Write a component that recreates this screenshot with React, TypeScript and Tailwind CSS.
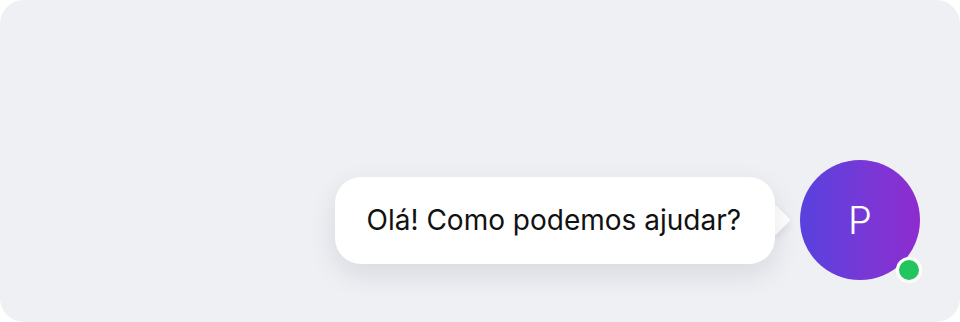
import React from 'react';

export default function App() {
  return (
    <div className="w-[960px] h-[322px] bg-white" style={{ fontFamily: 'Inter, "Noto Sans", sans-serif' }}>
      <div className="w-full h-full rounded-[24px] bg-[#eff0f4] flex items-end justify-end pr-10 pb-[42px]">
        <div className="flex items-center gap-[25px]">
          {/* Greeting bubble */}
          <div className="relative">
            <div className="absolute right-[-11px] top-1/2 -translate-y-1/2 w-[22px] h-[22px] rotate-45 bg-white rounded-[2px] shadow-[3px_3px_8px_rgba(15,23,42,0.08)]"></div>
            <div className="relative bg-white rounded-[26px] h-[87px] pl-8 pr-[34px] flex items-center shadow-[0_10px_28px_rgba(15,23,42,0.10)]">
              <span className="text-[28px] text-[#111]">Olá! Como podemos ajudar?</span>
            </div>
          </div>
          {/* Avatar */}
          <div className="relative w-[120px] h-[120px] rounded-full bg-gradient-to-r from-[#5741de] to-[#8e2bcf] flex items-center justify-center">
            <span className="text-white text-[38px] font-light">P</span>
            <div className="absolute right-[-2px] bottom-[-3px] w-[26px] h-[26px] rounded-full bg-[#22c55e] border-[3px] border-white"></div>
          </div>
        </div>
      </div>
    </div>
  );
}
